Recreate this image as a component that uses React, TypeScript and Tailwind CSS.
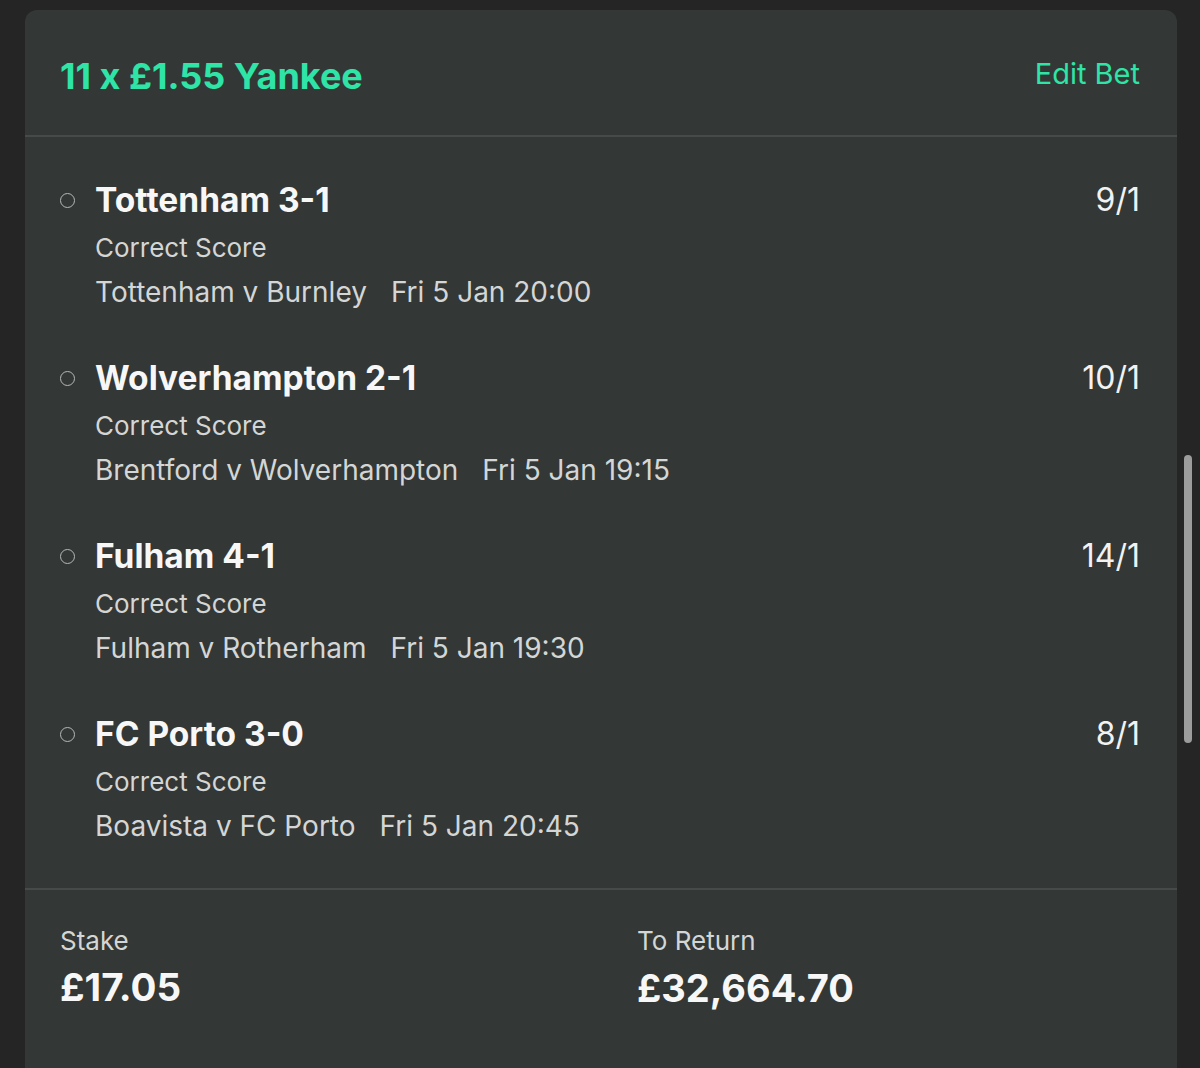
import React from "react";

const rows = [
  { title: "Tottenham 3-1", odds: "9/1", match: "Tottenham v Burnley", time: "Fri 5 Jan 20:00" },
  { title: "Wolverhampton 2-1", odds: "10/1", match: "Brentford v Wolverhampton", time: "Fri 5 Jan 19:15" },
  { title: "Fulham 4-1", odds: "14/1", match: "Fulham v Rotherham", time: "Fri 5 Jan 19:30" },
  { title: "FC Porto 3-0", odds: "8/1", match: "Boavista v FC Porto", time: "Fri 5 Jan 20:45" },
];

export default function App() {
  return (
    <div
      className="relative w-[1200px] h-[1068px] overflow-hidden bg-[#252525] pt-[10px] pl-[25px]"
      style={{ fontFamily: "Inter, 'Noto Sans', sans-serif" }}
    >
      <div className="w-[1152px] h-[1058px] rounded-t-[12px] bg-[#333735] flex flex-col">
        <div className="h-[127px] border-b-2 border-[#464a48] flex items-center justify-between pl-[35px] pr-[37px] pt-[6px]">
          <div className="text-[#2ee4a6] text-[36px] font-bold">11 x £1.55 Yankee</div>
          <div className="text-[#2ee4a6] text-[29px] -mt-[4px]">Edit Bet</div>
        </div>

        <div className="flex flex-col gap-[48px] pt-[43px] pb-[44px] pl-[35px] pr-[37px]">
          {rows.map((r) => (
            <div key={r.title} className="flex flex-col">
              <div className="h-[40px] flex items-center">
                <div className="w-[15px] h-[15px] rounded-full border-[1.5px] border-[#b6b9b7] mr-[21px]" />
                <div className="text-[#f7f7f7] text-[33.5px] font-bold flex-1 -ml-[1px]">{r.title}</div>
                <div className="text-[#f2f2f2] text-[32px]">{r.odds}</div>
              </div>
              <div className="h-[54px] flex items-center pl-[35px] text-[#d4d6d5] text-[26px]">Correct Score</div>
              <div className="h-[36px] flex items-center pl-[35px] text-[#d4d6d5] text-[28px] gap-[24px]">
                <span>{r.match}</span>
                <span>{r.time}</span>
              </div>
            </div>
          ))}
        </div>

        <div className="border-t-2 border-[#464a48] pl-[35px] pt-[33px] flex">
          <div className="w-[577px] flex flex-col">
            <div className="text-[#d4d6d5] text-[26px] h-[34px] flex items-center">Stake</div>
            <div className="text-[#f7f7f7] text-[38.5px] font-bold h-[62px] flex items-center">£17.05</div>
          </div>
          <div className="flex flex-col">
            <div className="text-[#d4d6d5] text-[26px] h-[34px] flex items-center">To Return</div>
            <div className="text-[#f7f7f7] text-[38px] font-bold h-[62px] flex items-center">£32,664.70</div>
          </div>
        </div>
      </div>

      <div className="absolute left-[1184px] top-[455px] w-[8px] h-[288px] rounded-full bg-[#9c9c9c]" />
    </div>
  );
}
